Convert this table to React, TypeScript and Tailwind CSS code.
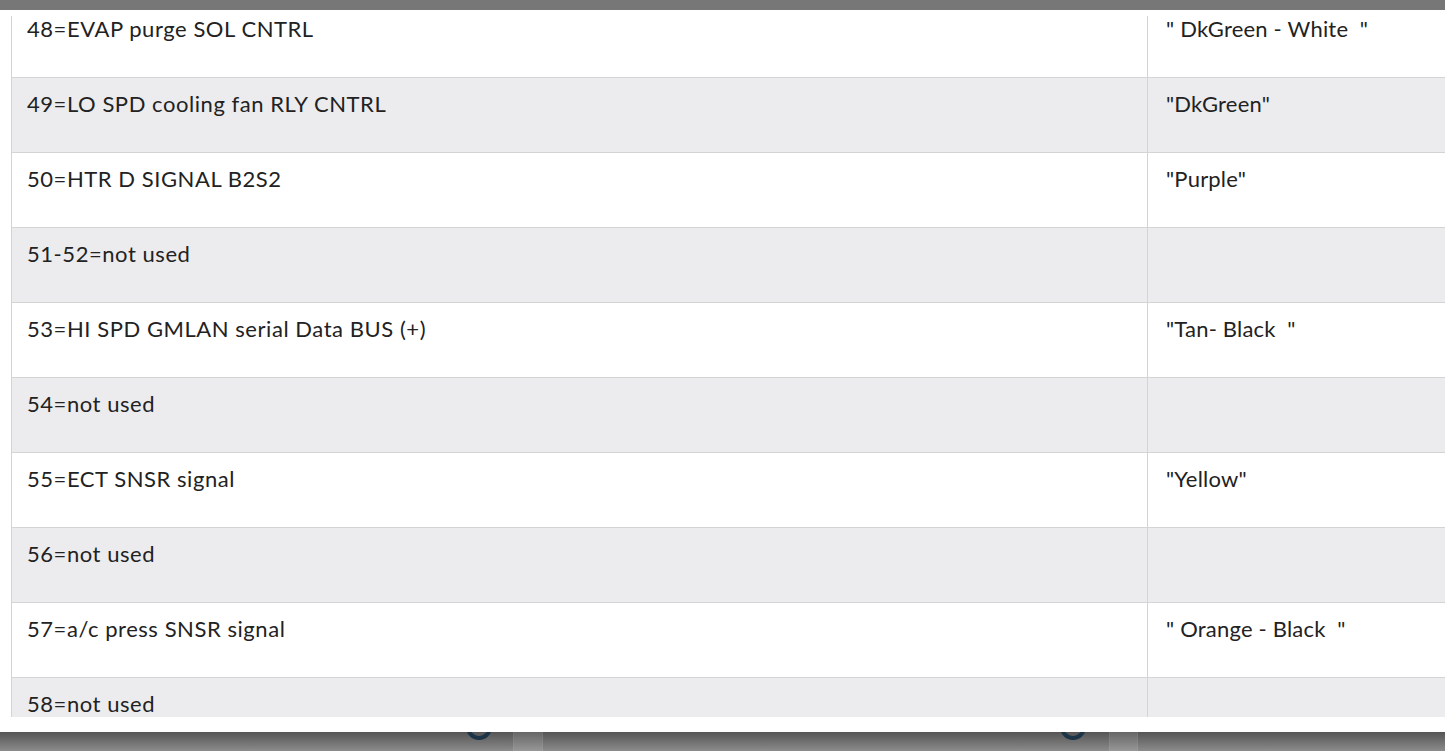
import React from "react";

const rows: [string, string][] = [
  ["48=EVAP purge SOL CNTRL", "\" DkGreen - White  \""],
  ["49=LO SPD cooling fan RLY CNTRL", "\"DkGreen\""],
  ["50=HTR D SIGNAL B2S2", "\"Purple\""],
  ["51-52=not used", ""],
  ["53=HI SPD GMLAN serial Data BUS (+)", "\"Tan- Black  \""],
  ["54=not used", ""],
  ["55=ECT SNSR signal", "\"Yellow\""],
  ["56=not used", ""],
  ["57=a/c press SNSR signal", "\" Orange - Black  \""],
  ["58=not used", ""],
];

const App = () => {
  return (
    <div className="w-[1445px] h-[751px] overflow-hidden bg-[#777777] flex flex-col font-['Lato',sans-serif] text-[#222]">
      <div className="h-[10px] shrink-0 bg-[#777777]" />

      <div className="h-[722px] shrink-0 bg-white pt-[6px]">
        <div className="ml-[11px] h-[701px] overflow-hidden border-l border-[#d4d4d4]">
          <div className="-mt-[13px]">
            {rows.map(([pin, wire], i) => (
              <div
                key={pin}
                className={`flex h-[75px] border-b border-[#d4d4d4] ${
                  i % 2 === 1 ? "bg-[#ececee]" : "bg-white"
                }`}
              >
                <div className="w-[1136px] shrink-0 border-r border-[#d4d4d4] pl-[15px] pt-[11px] text-[22px] leading-[30px] tracking-[0.55px]">
                  {pin}
                </div>
                <div className="flex-1 pl-[18px] pt-[11px] text-[22px] leading-[30px] tracking-[0.2px] whitespace-pre">
                  {wire}
                </div>
              </div>
            ))}
          </div>
        </div>
      </div>

      <div className="flex-1 overflow-hidden flex bg-gradient-to-b from-[#555555] to-[#8c8c8c]">
        <div className="ml-[466px] -mt-[18px] w-[26px] h-[26px] shrink-0 rounded-full border-4 border-[#1b3447]" />
        <div className="ml-[21px] w-[30px] h-full shrink-0 bg-white/10 border-x border-white/5" />
        <div className="ml-[517px] -mt-[18px] w-[26px] h-[26px] shrink-0 rounded-full border-4 border-[#1b3447]" />
        <div className="ml-[23px] w-[29px] h-full shrink-0 bg-white/10 border-x border-white/5" />
      </div>
    </div>
  );
};

export default App;
